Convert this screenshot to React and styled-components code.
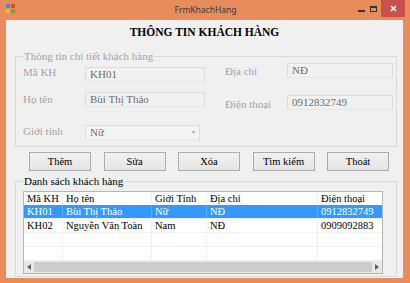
import React from "react";
import styled, { createGlobalStyle } from "styled-components";

const GlobalStyle = createGlobalStyle`
  html, body { margin: 0; padding: 0; background: #ffffff; }
  body { font-family: "Liberation Serif", "Times New Roman", serif; }
  * { box-sizing: border-box; }
`;

const Window = styled.div`
  width: 410px;
  height: 283px;
  background: #e98c5c;
  display: flex;
  flex-direction: column;
`;

const TitleBar = styled.div`
  height: 20px;
  flex: none;
  display: grid;
  grid-template-columns: 1fr auto 1fr;
  align-items: start;
  padding: 0 5px 0 6px;
`;

const AppIcon = styled.svg`
  margin-top: 4px;
  width: 9px;
  height: 9px;
`;

const Caption = styled.div`
  font-family: "Noto Sans", "Liberation Sans", sans-serif;
  font-size: 8.5px;
  line-height: 19px;
  color: #3a3a3a;
`;

const Controls = styled.div`
  display: flex;
  justify-self: end;
  align-items: flex-start;
`;

const CtlButton = styled.div`
  width: ${(p) => p.$w}px;
  height: 17px;
  display: flex;
  align-items: center;
  justify-content: center;
  background: ${(p) => (p.$close ? "#c9504d" : "transparent")};
  margin-left: ${(p) => p.$ml || 0}px;
`;

const Body = styled.div`
  flex: 1;
  margin: 0 7px 5px 6px;
  background: #f0f0f0;
  display: flex;
  flex-direction: column;
`;

const Heading = styled.h1`
  margin: 0;
  padding-top: 5px;
  height: 19px;
  line-height: 14px;
  font-size: 11.5px;
  font-weight: bold;
  text-align: center;
  color: #000;
`;

const GroupBox = styled.fieldset`
  margin: ${(p) => p.$mt}px 6px 0 9px;
  padding: ${(p) => p.$pad};
  border: 1px solid #d9d9d9;
  min-width: 0;
`;

const Legend = styled.legend`
  margin: 0;
  padding: 0 1px;
  font-size: 11px;
  line-height: 13px;
  color: ${(p) => (p.$disabled ? "#a3a3a3" : "#000")};
`;

const Fields = styled.div`
  display: flex;
  gap: 20px;
`;

const Column = styled.div`
  display: flex;
  flex-direction: column;
  padding-top: ${(p) => p.$pt}px;
`;

const FormRow = styled.div`
  display: flex;
  height: 15px;
  margin-top: ${(p) => p.$mt || 0}px;
`;

const Label = styled.div`
  width: 62px;
  padding-top: ${(p) => p.$pt ?? 1}px;
  font-size: 11px;
  line-height: 11px;
  color: #a3a3a3;
  white-space: nowrap;
`;

const TextBox = styled.div`
  width: ${(p) => p.$w}px;
  height: 15px;
  border: 1px solid #dcdcdc;
  border-bottom-color: #e6e6e6;
  background: #f1f1f1;
  padding-left: 4px;
  font-size: 11px;
  line-height: 12px;
  color: #6d6d6d;
  white-space: nowrap;
`;

const ComboBox = styled(TextBox)`
  display: flex;
  justify-content: space-between;
  background: #f4f4f4;
  padding-right: 3px;
`;

const ButtonRow = styled.div`
  display: flex;
  gap: 12.5px;
  margin-top: 5px;
  padding-left: 23px;
`;

const Button = styled.div`
  width: 62px;
  height: 19px;
  border: 1px solid #acacac;
  background: linear-gradient(#f0f0f0, #e5e5e5);
  display: flex;
  align-items: center;
  justify-content: center;
  font-size: 10.5px;
  color: #000;
`;

const ListView = styled.div`
  width: 360px;
  height: 83px;
  border: 1px solid #b4b6ba;
  background: #fff;
  display: flex;
  flex-direction: column;
  font-size: 10.5px;
`;

const LvRow = styled.div`
  display: grid;
  grid-template-columns: 39px 89px 55px 111px 1fr;
  height: ${(p) => p.$h}px;
  flex: none;
  background: ${(p) => (p.$selected ? "#3399ff" : "transparent")};
  color: ${(p) => (p.$selected ? "#fff" : "#000")};
  border-bottom: ${(p) => (p.$grid ? "1px solid #f0f0f0" : "none")};
`;

const Cell = styled.div`
  padding-left: 3px;
  line-height: 13px;
  white-space: nowrap;
  overflow: hidden;
  border-right: 1px solid ${(p) => (p.$selected ? "#5aadff" : "#f0f0f0")};
  &:last-child { border-right: none; }
`;

const ScrollBar = styled.div`
  margin-top: auto;
  height: 12px;
  display: flex;
  align-items: center;
  background: #e8e8e8;
`;

const Arrow = styled.div`
  width: 10px;
  height: 12px;
  flex: none;
  display: flex;
  align-items: center;
  justify-content: center;
`;

const Thumb = styled.div`
  flex: 1;
  height: 10px;
  background: #cdcdcd;
`;

const columns = ["Mã KH", "Họ tên", "Giới Tính", "Địa chỉ", "Điện thoại"];
const customers = [
  ["KH01", "Bùi Thị Thảo", "Nữ", "NĐ", "0912832749"],
  ["KH02", "Nguyễn Văn Toàn", "Nam", "NĐ", "0909092883"],
  ["", "", "", "", ""],
  ["", "", "", "", ""],
];

export default function App() {
  return (
    <>
      <GlobalStyle />
      <Window>
        <TitleBar>
          <AppIcon viewBox="0 0 9 9">
            <rect x="0" y="0" width="4" height="4" fill="#3a8fd8" />
            <rect x="5" y="0" width="4" height="4" fill="#e04a2f" />
            <rect x="0" y="5" width="4" height="4" fill="#f2b632" />
            <rect x="5" y="5" width="4" height="4" fill="#5fae3e" />
          </AppIcon>
          <Caption>FrmKhachHang</Caption>
          <Controls>
            <CtlButton $w={12}>
              <svg width="7" height="6" viewBox="0 0 7 6">
                <rect x="0" y="4" width="7" height="2" fill="#333" />
              </svg>
            </CtlButton>
            <CtlButton $w={13}>
              <svg width="7" height="6" viewBox="0 0 7 6">
                <rect x="0.5" y="0.5" width="6" height="5" fill="none" stroke="#333" />
                <rect x="0" y="0" width="7" height="2" fill="#333" />
              </svg>
            </CtlButton>
            <CtlButton $w={24} $close $ml={1}>
              <svg width="7" height="7" viewBox="0 0 7 7">
                <path d="M1 1 L6 6 M6 1 L1 6" stroke="#fff" strokeWidth="1.6" />
              </svg>
            </CtlButton>
          </Controls>
        </TitleBar>
        <Body>
          <Heading>THÔNG TIN KHÁCH HÀNG</Heading>
          <GroupBox $mt={11} $pad="0 6px 6px 7px">
            <Legend $disabled>Thông tin chi tiết khách hàng</Legend>
            <Fields>
              <Column $pt={4}>
                <FormRow>
                  <Label $pt={0}>Mã KH</Label>
                  <TextBox $w={120}>KH01</TextBox>
                </FormRow>
                <FormRow $mt={10}>
                  <Label $pt={2}>Họ tên</Label>
                  <TextBox $w={120}>Bùi Thị Thảo</TextBox>
                </FormRow>
                <FormRow $mt={18}>
                  <Label $pt={1}>Giới tính</Label>
                  <ComboBox $w={115}>
                    <span>Nữ</span>
                    <svg width="5" height="12" viewBox="0 0 5 12">
                      <path d="M0 5 L5 5 L2.5 8 Z" fill="#b8b8b8" />
                    </svg>
                  </ComboBox>
                </FormRow>
              </Column>
              <Column $pt={0}>
                <FormRow>
                  <Label $pt={3}>Địa chỉ</Label>
                  <TextBox $w={106}>NĐ</TextBox>
                </FormRow>
                <FormRow $mt={17}>
                  <Label $pt={4}>Điện thoại</Label>
                  <TextBox $w={106}>0912832749</TextBox>
                </FormRow>
              </Column>
            </Fields>
          </GroupBox>
          <ButtonRow>
            <Button>Thêm</Button>
            <Button>Sửa</Button>
            <Button>Xóa</Button>
            <Button>Tìm kiếm</Button>
            <Button>Thoát</Button>
          </ButtonRow>
          <GroupBox $mt={4} $pad="3px 0 2px 7px">
            <Legend>Danh sách khách hàng</Legend>
            <ListView>
              <LvRow $h={13}>
                {columns.map((c) => (
                  <Cell key={c}>{c}</Cell>
                ))}
              </LvRow>
              {customers.map((row, i) => (
                <LvRow key={i} $h={14} $grid $selected={i === 0}>
                  {row.map((v, j) => (
                    <Cell key={j} $selected={i === 0}>
                      {v}
                    </Cell>
                  ))}
                </LvRow>
              ))}
              <ScrollBar>
                <Arrow>
                  <svg width="4" height="6" viewBox="0 0 4 6">
                    <path d="M4 0 L0 3 L4 6 Z" fill="#606060" />
                  </svg>
                </Arrow>
                <Thumb />
                <Arrow>
                  <svg width="4" height="6" viewBox="0 0 4 6">
                    <path d="M0 0 L4 3 L0 6 Z" fill="#606060" />
                  </svg>
                </Arrow>
              </ScrollBar>
            </ListView>
          </GroupBox>
        </Body>
      </Window>
    </>
  );
}
